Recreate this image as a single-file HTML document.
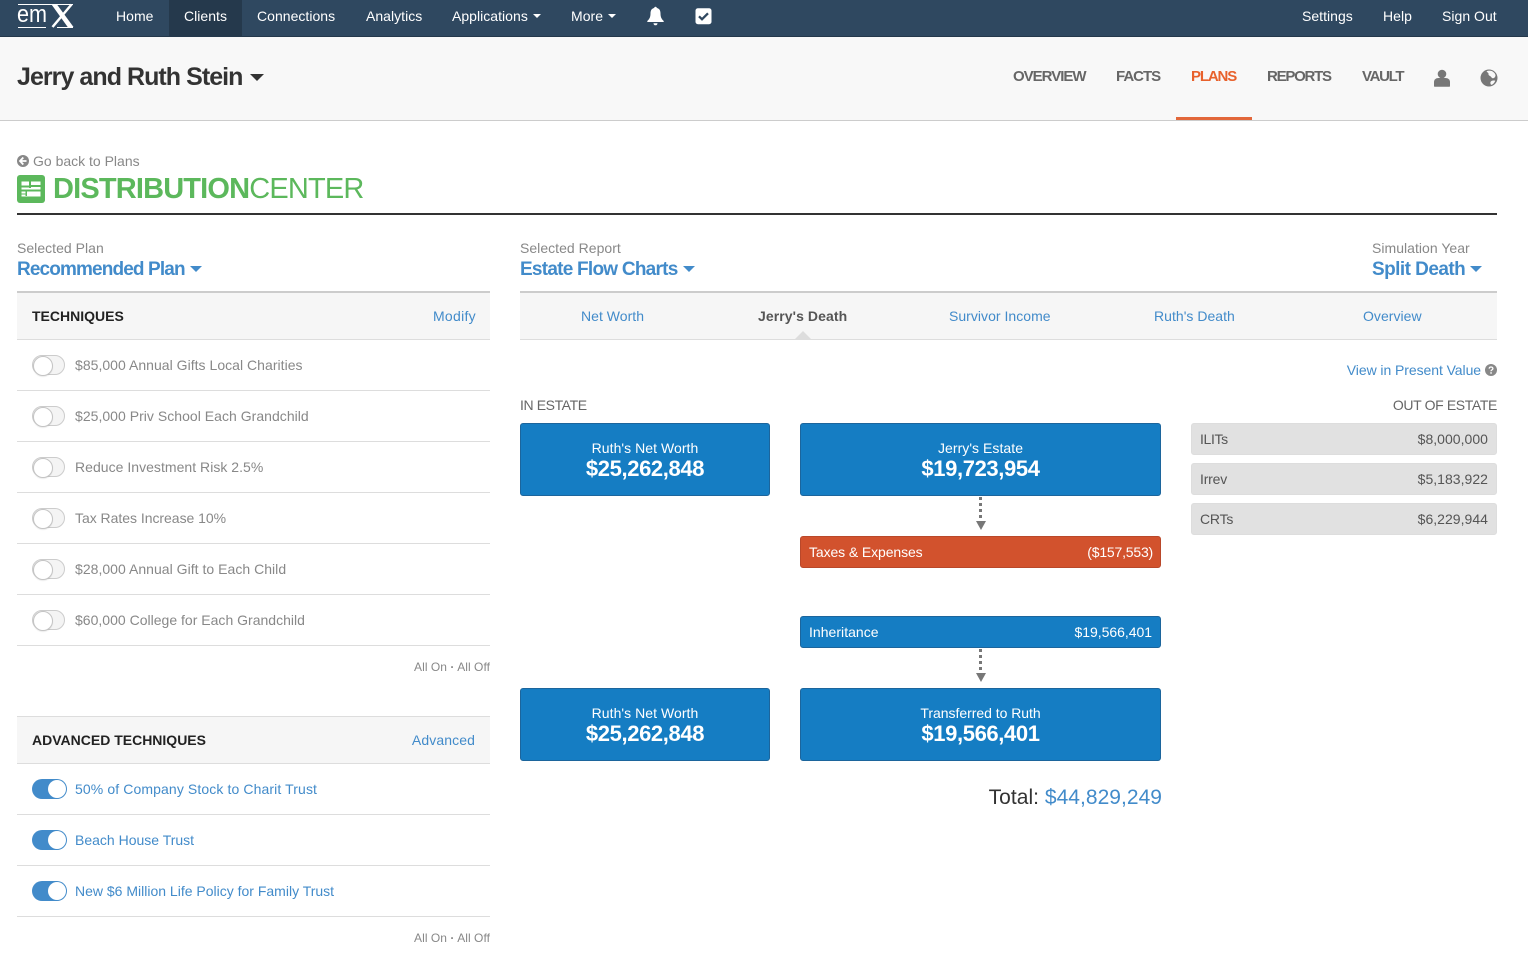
<!DOCTYPE html>
<html><head><meta charset="utf-8">
<style>
*{box-sizing:border-box}
html,body{margin:0;padding:0;background:#fff;width:1528px;height:976px;overflow:hidden}
body{font-family:"Liberation Sans",sans-serif;font-size:14px;position:relative;color:#555;letter-spacing:.03px}
.t{position:absolute;white-space:nowrap;line-height:20px}
.a{position:absolute}
.nav{color:#fff;top:6px;font-size:14px}
.sub{top:67px;font-size:15px;font-weight:bold;color:#666;letter-spacing:-1px}
.lab{font-size:14px;color:#888}
.big{font-size:19px;font-weight:bold;color:#428bca;letter-spacing:-.75px;line-height:24px}
.blue{color:#428bca}
.gr{color:#888}
.hr{position:absolute;height:1px;background:#ddd;left:17px;width:473px}
.off{position:absolute;left:32px;width:33px;height:20px;border:1px solid #ccc;border-radius:10px;background:#f4f4f4}
.off:before{content:"";position:absolute;left:0;top:0;width:18px;height:18px;background:#fff;border:1px solid #c4c4c4;border-radius:50%;box-shadow:0 1px 1px rgba(0,0,0,.08)}
.on{position:absolute;left:32px;width:35px;height:20px;border-radius:10px;background:#428bca}
.on:before{content:"";position:absolute;right:1px;top:1px;width:18px;height:18px;background:#fff;border-radius:50%}
.box{position:absolute;background:#157dc3;border:1px solid #1c659c;border-radius:3px;color:#fff}
.box .l{position:absolute;left:0;right:0;top:15px;text-align:center;font-size:14px;line-height:18px;letter-spacing:.05px}
.box .v{position:absolute;left:0;right:0;top:31px;text-align:center;font-size:22px;font-weight:bold;line-height:28px;letter-spacing:-.37px}
.bar .x{position:absolute;left:8px;top:5px;line-height:20px}
.bar .y{position:absolute;right:8px;top:5px;line-height:20px}
.g{position:absolute;left:1191px;width:306px;height:32px;background:#e1e1e1;border:1px solid #ddd;border-radius:3px;color:#555}
.g .x{position:absolute;left:8px;top:5px;line-height:20px;letter-spacing:-.2px}
.g .y{position:absolute;right:8px;top:5px;line-height:20px}
.hd{position:absolute;left:17px;width:473px;background:#f6f6f6}
.dots{position:absolute;left:979px;width:3px;background:repeating-linear-gradient(#777 0 3px,transparent 3px 6px)}
.arr{position:absolute;left:976px;width:0;height:0;border-left:5px solid transparent;border-right:5px solid transparent;border-top:9px solid #777}
.car{position:absolute;width:0;height:0;border-left:6px solid transparent;border-right:6px solid transparent;border-top:6px solid #428bca}
.small{font-size:12px;color:#888}
</style></head><body>

<div class="a" style="left:0;top:0;width:1528px;height:37px;background:#2f4860;border-bottom:1px solid #24384b"></div>
<div class="a" style="left:169px;top:0;width:73px;height:36px;background:#25394c"></div>

<div class="a" style="left:18px;top:4px;width:55px;height:1px;background:#fff"></div>
<div class="t" style="left:17px;top:3px;color:#fff;font-size:24px;line-height:24px;transform:scaleX(.9);transform-origin:left top;letter-spacing:0">em</div>
<svg class="a" style="left:50px;top:3px" width="24" height="25" viewBox="0 0 24 25"><path d="M1.500 1.500h5.500L23.500 24h-5.800z" fill="#fff"/><path d="M21.500 1.500L2.500 24" fill="none" stroke="#fff" stroke-width="2.500"/></svg>
<div class="a" style="left:18px;top:27px;width:28px;height:1px;background:#fff"></div>
<div class="a" style="left:57px;top:27px;width:16px;height:1px;background:#fff"></div>

<div class="t nav" style="left:116px">Home</div>
<div class="t nav" style="left:184px">Clients</div>
<div class="t nav" style="left:257px">Connections</div>
<div class="t nav" style="left:366px">Analytics</div>
<div class="t nav" style="left:452px">Applications</div>
<div class="a" style="left:533px;top:14px;border-left:4px solid transparent;border-right:4px solid transparent;border-top:4px solid #fff"></div>
<div class="t nav" style="left:571px">More</div>
<div class="a" style="left:608px;top:14px;border-left:4px solid transparent;border-right:4px solid transparent;border-top:4px solid #fff"></div>

<svg class="a" style="left:646px;top:6px" width="19" height="20" viewBox="0 0 19 20"><path d="M9.500 0.800c.8 0 1.300.5 1.300 1.200 2.800.5 3.700 2.800 3.700 5.500 0 3.500 1 5.500 3.200 7.500v1H1.300v-1c2.200-2 3.200-4 3.200-7.500 0-2.700.9-5 3.700-5.500 0-.7.500-1.200 1.300-1.200z" fill="#fff"/><path d="M7.500 17.200h4c0 1.200-.9 2.100-2 2.100s-2-.9-2-2.100z" fill="#fff"/></svg>
<svg class="a" style="left:695px;top:8px" width="17" height="17" viewBox="0 0 17 17"><rect x=".5" y=".2" width="16" height="16" rx="2.500" fill="#fff"/><path d="M4 8.300l3 3 6-6" fill="none" stroke="#2f4860" stroke-width="2.300"/></svg>

<div class="t nav" style="left:1302px">Settings</div>
<div class="t nav" style="left:1383px">Help</div>
<div class="t nav" style="left:1442px">Sign Out</div>

<div class="a" style="left:0;top:37px;width:1528px;height:84px;background:#f8f8f8;border-bottom:1px solid #ccc"></div>
<div class="t" style="left:17px;top:62px;font-size:25px;line-height:30px;font-weight:bold;color:#333;letter-spacing:-.95px">Jerry and Ruth Stein</div>
<div class="a" style="left:250px;top:74px;border-left:7px solid transparent;border-right:7px solid transparent;border-top:7px solid #333"></div>

<div class="t sub" style="left:1013px">OVERVIEW</div>
<div class="t sub" style="left:1116px">FACTS</div>
<div class="t sub" style="left:1191px;color:#e8612c;letter-spacing:-1.15px">PLANS</div>
<div class="t sub" style="left:1267px;letter-spacing:-1.25px">REPORTS</div>
<div class="t sub" style="left:1362px;letter-spacing:-1.3px">VAULT</div>
<div class="a" style="left:1176px;top:117px;width:76px;height:3px;background:#e2673a"></div>

<svg class="a" style="left:1433px;top:69px" width="18" height="18" viewBox="0 0 18 18"><circle cx="9" cy="5" r="4.300" fill="#777"/><path d="M1 17v-4c0-2.500 2-4 4.500-4h7c2.500 0 4.500 1.500 4.500 4v4c0 .5-.4.800-1 .8H2c-.6 0-1-.3-1-.8z" fill="#777"/></svg>
<svg class="a" style="left:1480px;top:69px" width="18" height="18" viewBox="0 0 18 18"><circle cx="9" cy="9" r="8.500" fill="#777"/><path d="M6.500 2.200c2.500-1 5-.5 6.500.5 1 .7 2.300 1.800 2.500 3.500.1 1.600-1.500 3.300-3 3-1.200-.3-1.300-1.700-2.500-2.200-1.300-.5-1.700-1.500-1.500-2.500-.2-1-1.500-1.200-2-2.300zM11.500 12c1-.6 2.700-.7 3.700-.3-.5 1.700-2 3.500-3.800 4.200-.8-.3-1.100-1.500-1-2.500.1-.6.500-1.100 1.100-1.400z" fill="#f8f8f8"/></svg>

<svg class="a" style="left:17px;top:155px" width="12" height="12" viewBox="0 0 12 12"><circle cx="6" cy="6" r="6" fill="#888"/><path d="M6.300 2.500L3 6l3.300 3.500M3.500 6h6" fill="none" stroke="#fff" stroke-width="1.800"/></svg>
<div class="t lab" style="left:33px;top:151px;letter-spacing:0">Go back to Plans</div>

<svg class="a" style="left:17px;top:175px" width="28" height="28" viewBox="0 0 28 28"><rect width="28" height="28" rx="3" fill="#5cb85c"/><rect x="4.500" y="6.500" width="19" height="15" fill="#fff"/><rect x="4" y="10.500" width="9" height="2" fill="#5cb85c"/><rect x="12" y="6" width="2" height="7" fill="#5cb85c"/><rect x="4" y="14.500" width="20" height="2" fill="#5cb85c"/><rect x="4" y="18.500" width="6" height="1" fill="#5cb85c"/><rect x="8.500" y="15" width="1.500" height="6" fill="#5cb85c"/><rect x="14" y="10" width="10" height="2" fill="#5cb85c"/></svg>
<div class="t" style="left:53px;top:172px;font-size:29px;line-height:34px;color:#5cb85c;letter-spacing:-.83px"><b>DISTRIBUTION</b>CENTER</div>
<div class="a" style="left:17px;top:213px;width:1480px;height:2px;background:#333"></div>

<div class="t lab" style="left:17px;top:238px">Selected Plan</div>
<div class="t big" style="left:17px;top:258px;letter-spacing:-.87px">Recommended Plan</div>
<div class="car" style="left:190px;top:266px"></div>
<div class="t lab" style="left:520px;top:238px">Selected Report</div>
<div class="t big" style="left:520px;top:258px">Estate Flow Charts</div>
<div class="car" style="left:683px;top:266px"></div>
<div class="t lab" style="left:1372px;top:238px">Simulation Year</div>
<div class="t big" style="left:1372px;top:258px;letter-spacing:-.55px">Split Death</div>
<div class="car" style="left:1470px;top:266px"></div>

<div class="hd" style="top:291px;height:49px;border-top:2px solid #ccc;border-bottom:1px solid #ddd"></div>
<div class="t" style="left:32px;top:306px;font-weight:bold;color:#222;letter-spacing:0">TECHNIQUES</div>
<div class="t blue" style="right:1052px;top:306px;letter-spacing:.3px">Modify</div>

<div class="off" style="top:355px"></div><div class="t gr" style="left:75px;top:355px">$85,000 Annual Gifts Local Charities</div><div class="hr" style="top:390px"></div>
<div class="off" style="top:406px"></div><div class="t gr" style="left:75px;top:406px">$25,000 Priv School Each Grandchild</div><div class="hr" style="top:441px"></div>
<div class="off" style="top:457px"></div><div class="t gr" style="left:75px;top:457px">Reduce Investment Risk 2.5%</div><div class="hr" style="top:492px"></div>
<div class="off" style="top:508px"></div><div class="t gr" style="left:75px;top:508px;letter-spacing:-.03px">Tax Rates Increase 10%</div><div class="hr" style="top:543px"></div>
<div class="off" style="top:559px"></div><div class="t gr" style="left:75px;top:559px">$28,000 Annual Gift to Each Child</div><div class="hr" style="top:594px"></div>
<div class="off" style="top:610px"></div><div class="t gr" style="left:75px;top:610px;letter-spacing:.01px">$60,000 College for Each Grandchild</div><div class="hr" style="top:645px"></div>
<div class="t small" style="right:1038px;top:657px;letter-spacing:.05px">All On <b>·</b> All Off</div>

<div class="hd" style="top:716px;height:48px;border-top:1px solid #ddd;border-bottom:1px solid #ddd"></div>
<div class="t" style="left:32px;top:730px;font-weight:bold;color:#222;letter-spacing:0">ADVANCED TECHNIQUES</div>
<div class="t blue" style="right:1053px;top:730px;letter-spacing:.1px">Advanced</div>

<div class="on" style="top:779px"></div><div class="t blue" style="left:75px;top:779px;letter-spacing:.11px">50% of Company Stock to Charit Trust</div><div class="hr" style="top:814px"></div>
<div class="on" style="top:830px"></div><div class="t blue" style="left:75px;top:830px;letter-spacing:0">Beach House Trust</div><div class="hr" style="top:865px"></div>
<div class="on" style="top:881px"></div><div class="t blue" style="left:75px;top:881px;letter-spacing:0">New $6 Million Life Policy for Family Trust</div><div class="hr" style="top:916px"></div>
<div class="t small" style="right:1038px;top:928px;letter-spacing:.05px">All On <b>·</b> All Off</div>

<div class="hd" style="left:520px;width:977px;top:291px;height:49px;border-top:2px solid #ccc;border-bottom:1px solid #ddd"></div>
<div class="t blue" style="left:581px;top:306px">Net Worth</div>
<div class="t" style="left:758px;top:306px;font-weight:bold;color:#555;letter-spacing:.08px">Jerry's Death</div>
<div class="t blue" style="left:949px;top:306px">Survivor Income</div>
<div class="t blue" style="left:1154px;top:306px">Ruth's Death</div>
<div class="t blue" style="left:1363px;top:306px">Overview</div>
<div class="a" style="left:795px;top:331px;border-left:8px solid transparent;border-right:8px solid transparent;border-bottom:8px solid #ddd"></div>

<div class="t blue" style="right:47px;top:360px;letter-spacing:-.07px">View in Present Value</div>
<svg class="a" style="left:1485px;top:364px" width="12" height="12" viewBox="0 0 12 12"><circle cx="6" cy="6" r="6" fill="#888"/><path d="M4.200 4.600c0-1 .8-1.600 1.800-1.600s1.900.6 1.900 1.600c0 1.300-1.900 1.300-1.900 2.600" fill="none" stroke="#fff" stroke-width="1.300"/><rect x="5.300" y="8.200" width="1.500" height="1.500" fill="#fff"/></svg>

<div class="t" style="left:520px;top:395px;color:#666;letter-spacing:-.4px">IN ESTATE</div>
<div class="t" style="right:31px;top:395px;color:#666;letter-spacing:-.37px">OUT OF ESTATE</div>

<div class="box" style="left:520px;top:423px;width:250px;height:73px"><div class="l">Ruth's Net Worth</div><div class="v">$25,262,848</div></div>
<div class="box" style="left:800px;top:423px;width:361px;height:73px"><div class="l">Jerry's Estate</div><div class="v">$19,723,954</div></div>
<div class="dots" style="top:497px;height:23px"></div>
<div class="arr" style="top:521px"></div>
<div class="box bar" style="left:800px;top:536px;width:361px;height:32px;background:#d2522d;border-color:#b9482a"><span class="x" style="letter-spacing:-.1px">Taxes &amp; Expenses</span><span class="y" style="letter-spacing:-.2px;right:7px">($157,553)</span></div>
<div class="box bar" style="left:800px;top:616px;width:361px;height:32px"><span class="x">Inheritance</span><span class="y" style="letter-spacing:-.03px">$19,566,401</span></div>
<div class="dots" style="top:649px;height:23px"></div>
<div class="arr" style="top:673px"></div>
<div class="box" style="left:520px;top:688px;width:250px;height:73px"><div class="l">Ruth's Net Worth</div><div class="v">$25,262,848</div></div>
<div class="box" style="left:800px;top:688px;width:361px;height:73px"><div class="l" style="letter-spacing:-.03px">Transferred to Ruth</div><div class="v">$19,566,401</div></div>

<div class="t" style="right:366px;top:786px;font-size:21px;line-height:24px;color:#333;letter-spacing:.03px">Total: <span class="blue">$44,829,249</span></div>

<div class="g" style="top:423px"><span class="x" style="letter-spacing:-.35px">ILITs</span><span class="y">$8,000,000</span></div>
<div class="g" style="top:463px"><span class="x">Irrev</span><span class="y">$5,183,922</span></div>
<div class="g" style="top:503px"><span class="x">CRTs</span><span class="y">$6,229,944</span></div>

</body></html>
